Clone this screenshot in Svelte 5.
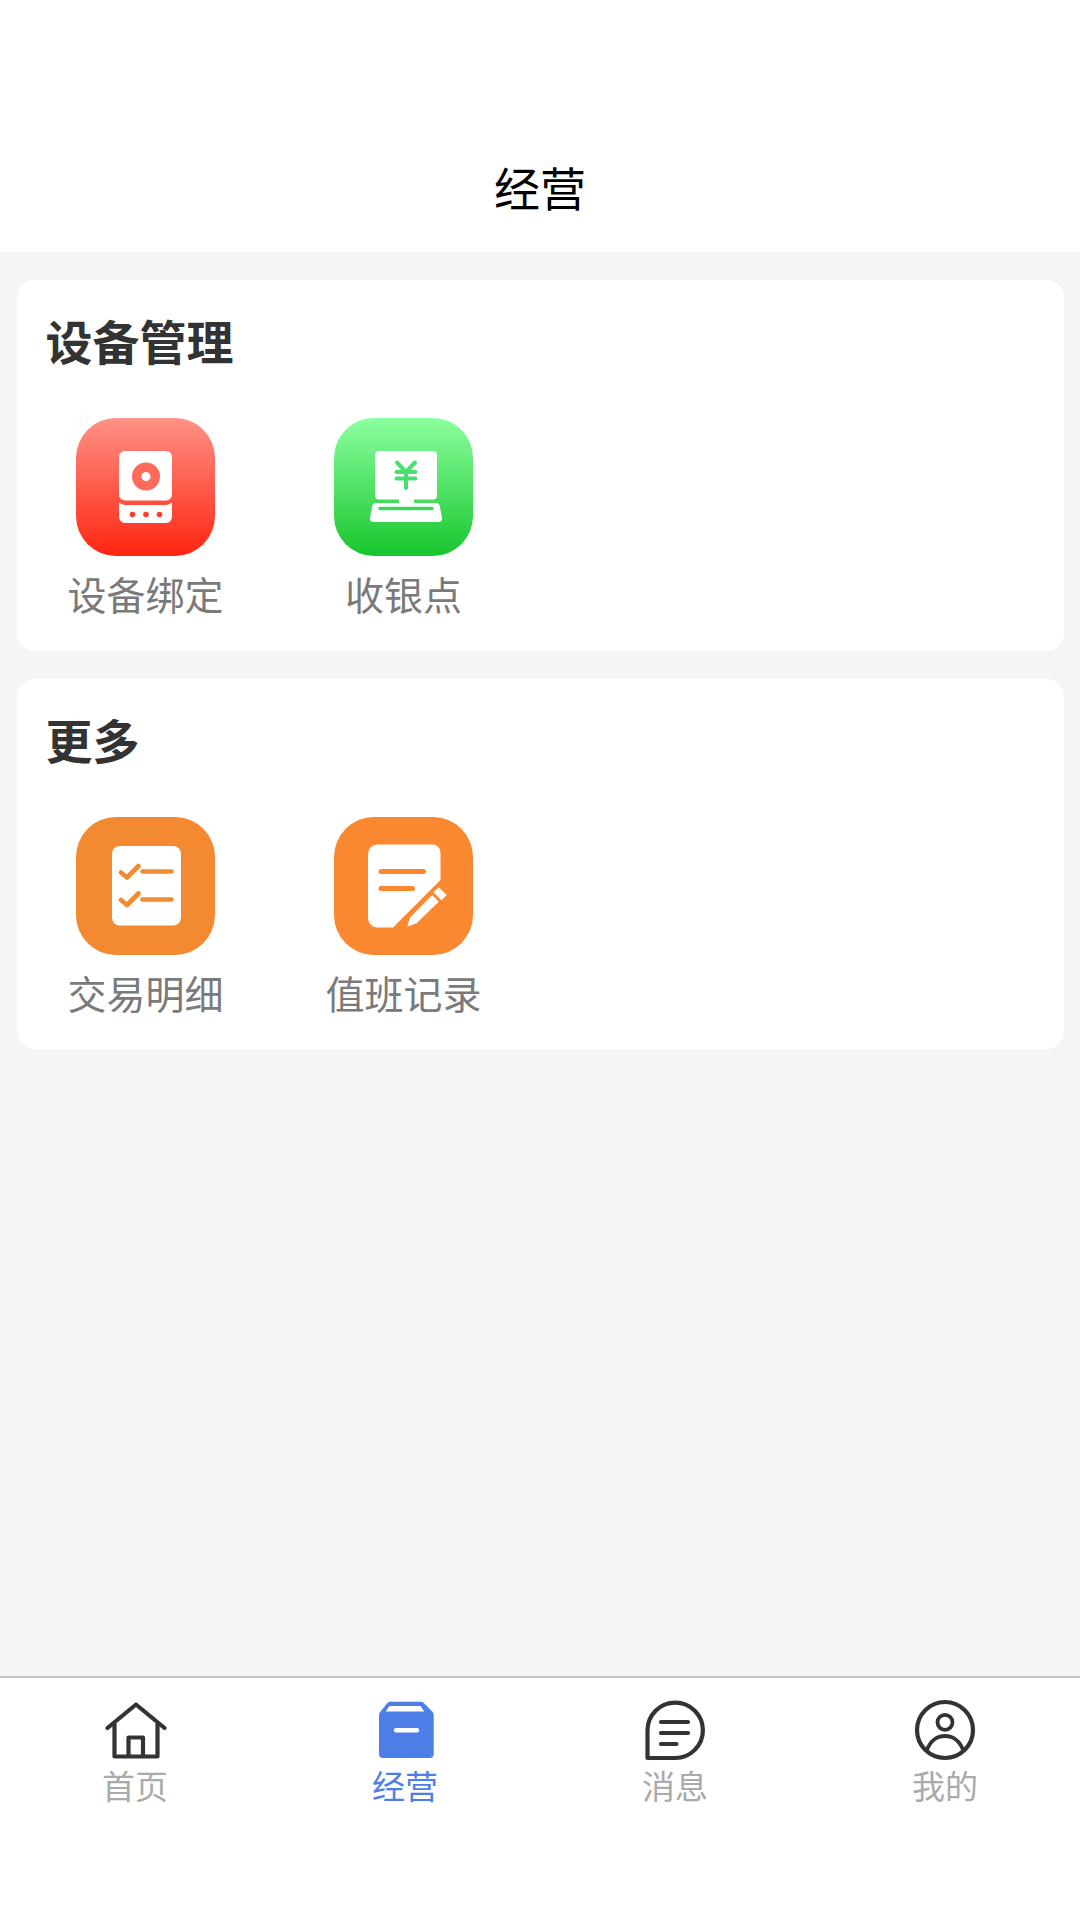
<script>
  const tabs = [
    { key: 'home', label: '首页' },
    { key: 'biz', label: '经营', active: true },
    { key: 'msg', label: '消息' },
    { key: 'me', label: '我的' }
  ];
</script>

<div class="page">
  <header class="head"><h1>经营</h1></header>

  <main class="main">
    <section class="card">
      <h2>设备管理</h2>
      <div class="grid">
        <div class="item">
          <svg class="app red" viewBox="0 0 138 138">
            <rect x="42.500" y="33" width="53" height="49.500" rx="6" fill="#fff" />
            <path d="M42.500 84.500c3 2 5 2.500 8 2.500h37c3 0 5-.5 8-2.500V99a6 6 0 0 1-6 6h-41a6 6 0 0 1-6-6z" fill="#fff" />
            <circle cx="69.500" cy="58.500" r="14" fill="#fe6a5c" />
            <circle cx="69.500" cy="58.500" r="4.500" fill="#fff" />
            <circle cx="56" cy="96.500" r="2.800" fill="#ff3d2c" />
            <circle cx="69.500" cy="96.500" r="2.800" fill="#ff3d2c" />
            <circle cx="83" cy="96.500" r="2.800" fill="#ff3d2c" />
          </svg>
          <span>设备绑定</span>
        </div>
        <div class="item">
          <svg class="app green" viewBox="0 0 138 138">
            <rect x="40.500" y="33" width="62" height="48.500" rx="4" fill="#fff" />
            <rect x="64.500" y="80" width="15" height="8" fill="#fff" />
            <path d="M42 85h60c1.500 0 2.500.8 3 2l2.500 12.500c.5 2.500-1 4.500-3.500 4.500H39c-2.500 0-4-2-3.500-4.500L38 87c.5-1.200 2-2 4-2z" fill="#fff" />
            <path d="M45.500 90.500h52" stroke="#3bd561" stroke-width="3.400" stroke-linecap="round" fill="none" />
            <path d="M62.500 44.500l9 9.500 9-9.500M62 54h19M62 60.500h19M71.500 54v16" stroke="#47e070" stroke-width="4" stroke-linecap="round" stroke-linejoin="round" fill="none" />
          </svg>
          <span>收银点</span>
        </div>
      </div>
    </section>

    <section class="card">
      <h2>更多</h2>
      <div class="grid">
        <div class="item">
          <svg class="app orange-a" viewBox="0 0 138 138">
            <rect x="35.500" y="29" width="69" height="79.500" rx="8" fill="#fff" />
            <g stroke="#f38a31" stroke-width="4.600" stroke-linecap="round" stroke-linejoin="round" fill="none">
              <path d="M44.500 55.500l6 5L62 49M44.500 83l6 5L62 76.500" />
              <path d="M66 54.500h29M66 82.500h29" />
            </g>
          </svg>
          <span>交易明细</span>
        </div>
        <div class="item">
          <svg class="app orange-b" viewBox="0 0 138 138">
            <path d="M43 27.500h55a8 8 0 0 1 8 8V63L58.500 110.500H43a9.500 9.500 0 0 1-9.500-9.500V37a9.500 9.500 0 0 1 9.500-9.500z" fill="#fff" />
            <path d="M46.500 54.500h42.500M46.500 71.500h31.500" stroke="#fa8831" stroke-width="5" stroke-linecap="round" fill="none" />
            <path d="M75.500 100.500L97.700 78l6.600 6.700L82 106.300l-9.300 3.400zM104.300 70.300l8 7.700-5.300 5.300-8-8z" fill="#fff" />
          </svg>
          <span>值班记录</span>
        </div>
      </div>
    </section>
  </main>

  <nav class="tabs">
    {#each tabs as tab}
      <div class="tab" class:active={tab.active}>
        <svg class="tab-icon" viewBox="0 0 64 64">
          {#if tab.key === 'home'}
            <path d="M4.500 30L33 6.500 61.500 30M11.500 25v33.500h43V25M25.500 58.500V39.500h14.500v19" fill="none" stroke="#333" stroke-width="4.200" stroke-linecap="round" stroke-linejoin="round" />
          {:else if tab.key === 'biz'}
            <path d="M17 3.700h31c1 0 2 .5 2.700 1.300l8.500 8.500c1 1 1.500 2.200 1.500 3.500v39a4 4 0 0 1-4 4H10a4 4 0 0 1-4-4V17c0-1.300.5-2.500 1.500-3.500L14.500 5c.7-.8 1.500-1.300 2.500-1.300z" fill="#4d7ee8" />
            <path d="M12.700 13.500h38.500L47.500 8H16.500z" fill="#fff" />
            <path d="M23 32.300h21" stroke="#fff" stroke-width="4.400" stroke-linecap="round" />
          {:else if tab.key === 'msg'}
            <path d="M4.500 60V32.300A27.700 27.700 0 1 1 32.200 60z" fill="none" stroke="#333" stroke-width="4.200" stroke-linejoin="round" />
            <path d="M18 24h27M18 35h27M18 46h15.500" stroke="#333" stroke-width="4.200" stroke-linecap="round" fill="none" />
          {:else}
            <circle cx="32" cy="32" r="28" fill="none" stroke="#333" stroke-width="4.200" />
            <circle cx="32" cy="24.300" r="7.500" fill="none" stroke="#333" stroke-width="3.800" />
            <path d="M13.700 52.500C17 43 24 38 32 38s15 5 18.300 14.500" fill="none" stroke="#333" stroke-width="3.800" />
          {/if}
        </svg>
        <span>{tab.label}</span>
      </div>
    {/each}
  </nav>
</div>

<style>
  :global(body) {
    margin: 0;
    background: #f5f5f5;
  }
  .page {
    width: 1080px;
    height: 1920px;
    display: flex;
    flex-direction: column;
    background: #f5f5f5;
    font-family: "Noto Sans CJK SC", "Noto Sans", sans-serif;
  }
  .head {
    height: 252px;
    box-sizing: border-box;
    padding-top: 156px;
    background: #fff;
    flex: none;
  }
  h1 {
    margin: 0;
    font-size: 46px;
    font-weight: 400;
    line-height: 60px;
    text-align: center;
    color: #000;
  }
  .main {
    flex: 1;
    padding: 28px 16px 0 16.500px;
    display: flex;
    flex-direction: column;
    gap: 28px;
  }
  .card {
    height: 370.500px;
    box-sizing: border-box;
    padding-top: 30px;
    background: #fff;
    border-radius: 18px;
  }
  h2 {
    margin: 0 0 48px 29px;
    font-size: 47px;
    font-weight: 700;
    line-height: 60px;
    color: #333;
  }
  .grid {
    display: grid;
    grid-template-columns: repeat(4, 258px);
  }
  .item {
    display: flex;
    flex-direction: column;
    align-items: center;
    gap: 11px;
    font-size: 39px;
    line-height: 52px;
    color: #7a7a7a;
  }
  .app {
    display: block;
    width: 139px;
    height: 138px;
    border-radius: 40px;
  }
  .red {
    background: linear-gradient(180deg, #ff9287, #ff2511);
  }
  .green {
    background: linear-gradient(180deg, #8bff9f, #18c52e);
  }
  .orange-a {
    background: #f38a31;
  }
  .orange-b {
    background: #fa8831;
  }
  .tabs {
    flex: none;
    height: 244px;
    box-sizing: border-box;
    border-top: 2px solid #c4c4c4;
    background: #fff;
    display: grid;
    grid-template-columns: repeat(4, 270px);
    padding-top: 20px;
  }
  .tab {
    display: flex;
    flex-direction: column;
    align-items: center;
    gap: 3px;
    font-size: 33px;
    line-height: 40px;
    color: #aaa;
  }
  .tab.active {
    color: #4d7ee8;
  }
  .tab-icon {
    display: block;
    width: 64px;
    height: 64px;
  }
</style>
